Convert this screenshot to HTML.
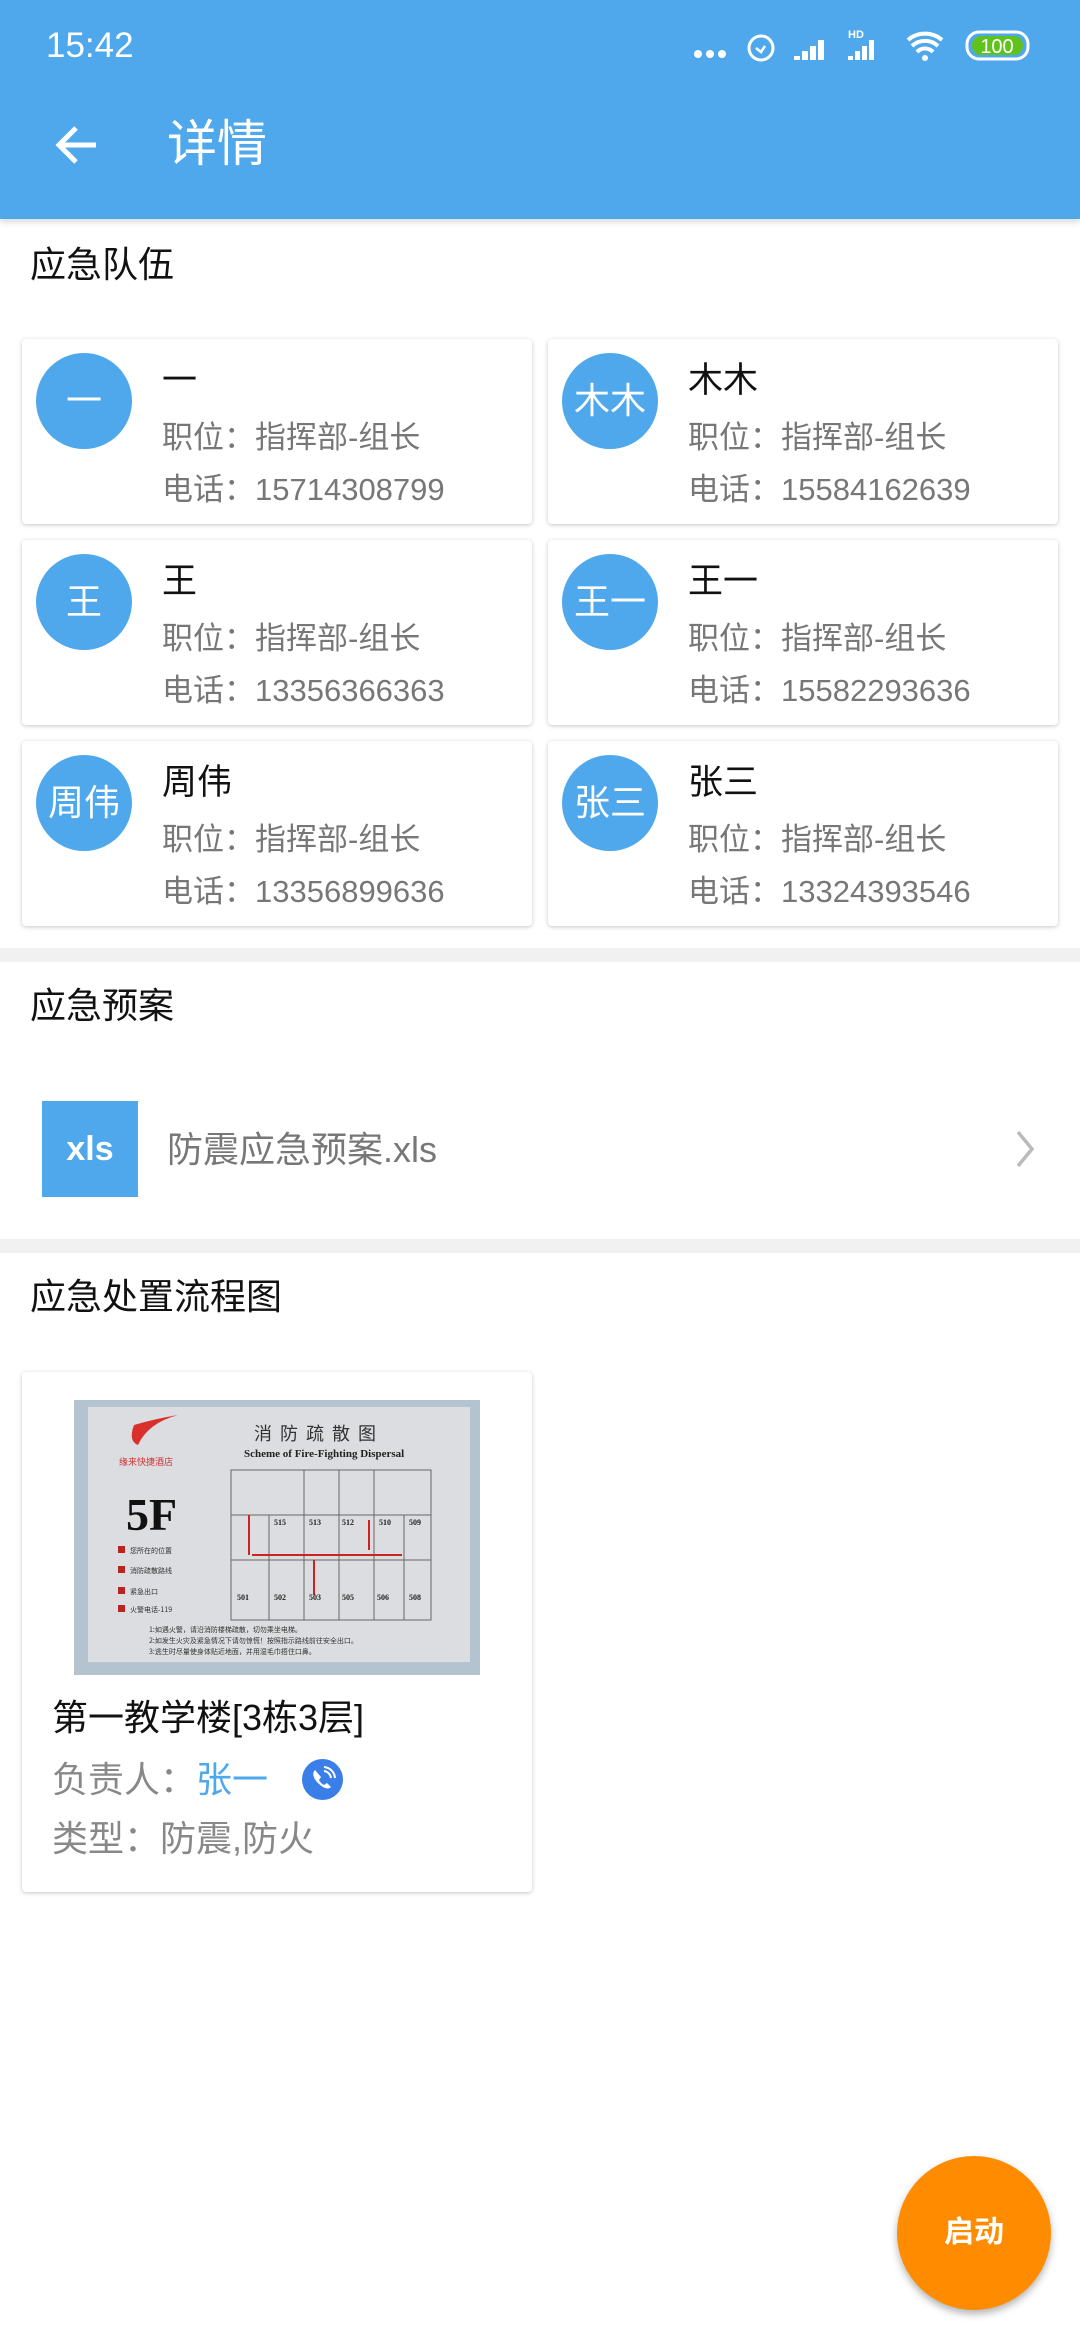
<!DOCTYPE html>
<html><head><meta charset="utf-8">
<style>
*{margin:0;padding:0;box-sizing:border-box}
body{width:1080px;height:2340px;background:#fff;font-family:"Liberation Sans","Noto Sans CJK SC",sans-serif;position:relative;overflow:hidden}
.abs{position:absolute}
.bar{left:0;top:0;width:1080px;height:219px;background:#4fa8ec;box-shadow:0 3px 6px rgba(0,0,0,.15)}
.sec{left:30px;font-size:36px;color:#111;line-height:40px}
.card{background:#fff;border-radius:4px;box-shadow:0 1px 4px rgba(0,0,0,.22);width:510px;height:185px}
.av{position:absolute;left:14px;top:14px;width:96px;height:96px;border-radius:50%;background:#4fa8ec;color:#fff;font-size:36px;line-height:96px;text-align:center}
.nm{position:absolute;left:140px;top:22px;font-size:35px;color:#111;line-height:40px}
.l1{position:absolute;left:140px;top:80px;font-size:31px;color:#777;line-height:38px}
.l2{position:absolute;left:140px;top:132px;font-size:31px;color:#777;line-height:38px}
.gap{left:0;width:1080px;height:14px;background:#f1f1f1}
</style></head><body>
<div class="abs bar"></div>
<div class="abs" style="left:46px;top:26px;color:#fff;font-size:35px;line-height:40px">15:42</div>
<svg class="abs" style="left:690px;top:26px" width="360" height="40" viewBox="0 0 360 40">
<g fill="#fff"><circle cx="8" cy="28" r="4"/><circle cx="20" cy="28" r="4"/><circle cx="32" cy="28" r="4"/></g>
<circle cx="71" cy="22" r="12" fill="none" stroke="#fff" stroke-width="3"/><path d="M66 22l5 4 4-6" stroke="#fff" stroke-width="2.5" fill="none"/>
<path d="M104 34h6v-4h-6zM112 34h6v-9h-6zM120 34h6v-14h-6zM128 34h6v-20h-6z" fill="#fff"/>
<text x="158" y="12" fill="#fff" font-size="11" font-family="Liberation Sans" font-weight="bold">HD</text>
<path d="M158 34h5v-4h-5zM165 34h5v-9h-5zM172 34h5v-14h-5zM179 34h5v-20h-5z" fill="#fff"/>
<path d="M218 14a26 26 0 0 1 34 0M222 20a19 19 0 0 1 26 0M227 26a11 11 0 0 1 16 0" stroke="#fff" stroke-width="4" fill="none"/><circle cx="235" cy="32" r="3" fill="#fff"/>
<rect x="277" y="6" width="61" height="27" rx="12" fill="none" stroke="#fff" stroke-width="3"/>
<rect x="282" y="10" width="51" height="19" rx="9" fill="#5fc21d"/>
<text x="307" y="27" fill="#fff" font-size="20" text-anchor="middle" font-family="Liberation Sans">100</text>
</svg>
<svg class="abs" style="left:52px;top:120px" width="50" height="50" viewBox="0 0 50 50"><path d="M44 25H8M24 8L7 25l17 17" stroke="#fff" stroke-width="5" fill="none"/></svg>
<div class="abs" style="left:167px;top:114px;color:#fff;font-size:50px;line-height:60px">详情</div>

<div class="abs sec" style="top:245px">应急队伍</div>

<div class="abs card" style="left:22px;top:339px"><div class="av">一</div><div class="nm">一</div><div class="l1">职位：指挥部-组长</div><div class="l2">电话：15714308799</div></div>
<div class="abs card" style="left:548px;top:339px"><div class="av">木木</div><div class="nm">木木</div><div class="l1">职位：指挥部-组长</div><div class="l2">电话：15584162639</div></div>
<div class="abs card" style="left:22px;top:540px"><div class="av">王</div><div class="nm">王</div><div class="l1">职位：指挥部-组长</div><div class="l2">电话：13356366363</div></div>
<div class="abs card" style="left:548px;top:540px"><div class="av">王一</div><div class="nm">王一</div><div class="l1">职位：指挥部-组长</div><div class="l2">电话：15582293636</div></div>
<div class="abs card" style="left:22px;top:741px"><div class="av">周伟</div><div class="nm">周伟</div><div class="l1">职位：指挥部-组长</div><div class="l2">电话：13356899636</div></div>
<div class="abs card" style="left:548px;top:741px"><div class="av">张三</div><div class="nm">张三</div><div class="l1">职位：指挥部-组长</div><div class="l2">电话：13324393546</div></div>

<div class="abs gap" style="top:948px"></div>
<div class="abs sec" style="top:986px">应急预案</div>
<div class="abs" style="left:42px;top:1101px;width:96px;height:96px;background:#4fa8ec;color:#fff;font-size:34px;font-weight:bold;line-height:96px;text-align:center">xls</div>
<div class="abs" style="left:167px;top:1130px;font-size:36px;color:#777;line-height:40px">防震应急预案.xls</div>
<svg class="abs" style="left:1012px;top:1128px" width="26" height="42" viewBox="0 0 26 42"><path d="M6 4l14 17-14 17" stroke="#bbb" stroke-width="3.5" fill="none"/></svg>

<div class="abs gap" style="top:1239px"></div>
<div class="abs sec" style="top:1277px">应急处置流程图</div>

<div class="abs card" style="left:22px;top:1372px;height:520px">
<svg style="position:absolute;left:52px;top:28px" width="406" height="275" viewBox="0 0 406 275">
<rect width="406" height="275" fill="#b4c3d0"/>
<rect x="14" y="7" width="382" height="255" fill="#dcdde0"/>
<path d="M60 25q20-6 44-10q-30 8-40 30q-10-4-4-20z" fill="#d9302c"/>
<text x="45" y="65" font-size="9" fill="#c33" font-family="Noto Sans CJK SC">缘来快捷酒店</text>
<text x="52" y="130" font-size="46" font-weight="bold" font-family="Liberation Serif" fill="#111">5F</text>
<text x="180" y="40" font-size="18" fill="#333" font-family="Noto Sans CJK SC" letter-spacing="8">消防疏散图</text>
<text x="170" y="57" font-size="11" fill="#222" font-family="Liberation Serif" font-weight="bold">Scheme of Fire-Fighting Dispersal</text>
<g fill="none" stroke="#666" stroke-width="1"><rect x="157" y="70" width="200" height="150"/><path d="M157 115h200M157 160h200M195 115v105M230 70v150M265 70v150M300 70v150M330 115v105"/></g>
<g stroke="#c22" stroke-width="2" fill="none"><path d="M175 155v-40M178 155h150M240 195v-35M295 150v-30"/></g>
<g font-size="8" font-family="Liberation Serif" font-weight="bold" fill="#222"><text x="163" y="200">501</text><text x="200" y="200">502</text><text x="235" y="200">503</text><text x="268" y="200">505</text><text x="303" y="200">506</text><text x="335" y="200">508</text><text x="200" y="125">515</text><text x="235" y="125">513</text><text x="268" y="125">512</text><text x="305" y="125">510</text><text x="335" y="125">509</text></g>
<g fill="#b22"><rect x="44" y="146" width="7" height="7"/><rect x="44" y="166" width="7" height="7"/><rect x="44" y="187" width="7" height="7"/><rect x="44" y="205" width="7" height="7"/></g>
<g font-size="7" fill="#333" font-family="Noto Sans CJK SC"><text x="56" y="153">您所在的位置</text><text x="56" y="173">消防疏散路线</text><text x="56" y="194">紧急出口</text><text x="56" y="212">火警电话-119</text><text x="75" y="232">1:如遇火警，请沿消防楼梯疏散，切勿乘坐电梯。</text><text x="75" y="243">2:如发生火灾及紧急情况下请勿惊慌！按照指示路线前往安全出口。</text><text x="75" y="254">3:逃生时尽量使身体贴近地面，并用湿毛巾捂住口鼻。</text></g>
</svg>
<div style="position:absolute;left:30px;top:325px;font-size:36px;color:#111;line-height:42px">第一教学楼[3栋3层]</div>
<div style="position:absolute;left:30px;top:387px;font-size:36px;color:#888;line-height:42px">负责人：<span style="color:#4fa8ec">张一</span></div>
<svg style="position:absolute;left:280px;top:387px" width="41" height="41" viewBox="0 0 41 41"><circle cx="20.5" cy="20.5" r="20.5" fill="#3a7ee8"/><path d="M13 11c-3 3-2 8 3 13s10 7 13 4l-4-4-3 2c-2-1-4-3-5-5l2-3z" fill="#fff"/><path d="M22 12a8 8 0 0 1 7 7M22 8a12 12 0 0 1 11 11" stroke="#fff" stroke-width="2" fill="none"/></svg>
<div style="position:absolute;left:30px;top:446px;font-size:36px;color:#888;line-height:42px">类型：防震,防火</div>
</div>

<div class="abs" style="left:897px;top:2156px;width:154px;height:154px;border-radius:50%;background:#ff8c00;box-shadow:0 4px 8px rgba(0,0,0,.3);color:#fff;font-size:30px;font-weight:bold;line-height:154px;text-align:center">启动</div>
</body></html>
